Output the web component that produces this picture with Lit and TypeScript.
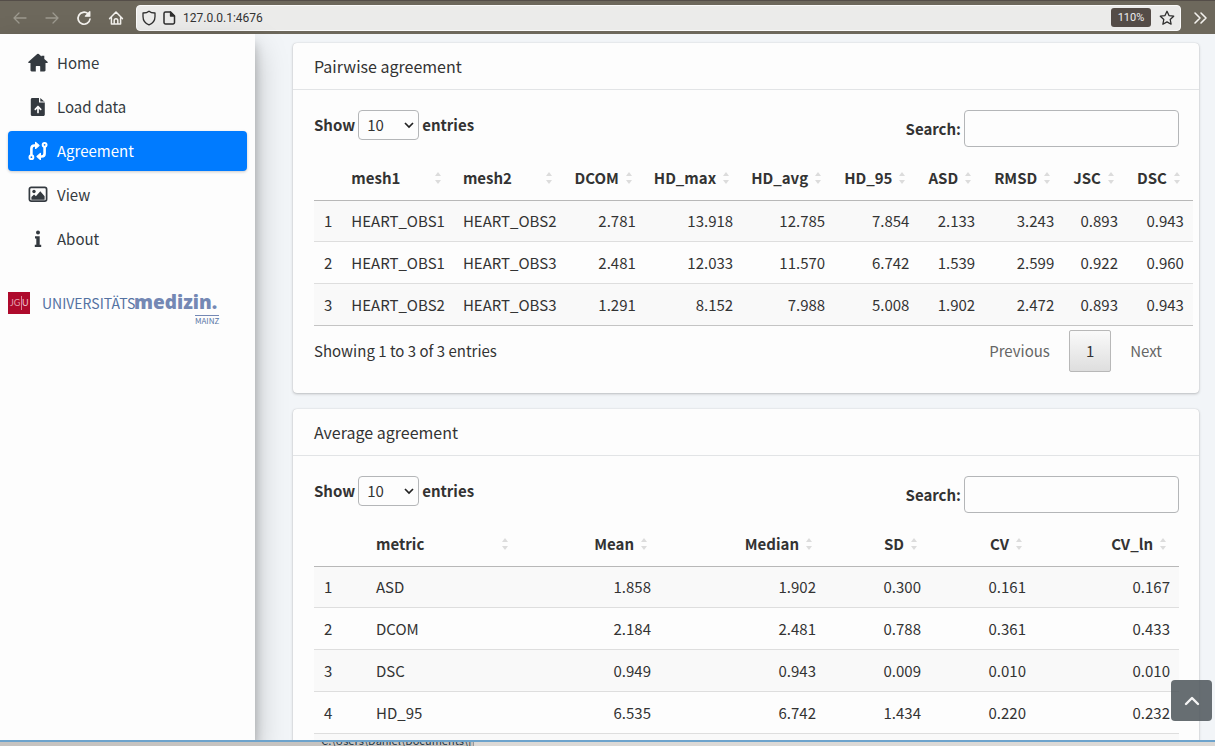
import { LitElement, html, svg, css } from "lit";
import { customElement, property } from "lit/decorators.js";
import { classMap } from "lit/directives/class-map.js";

const stroke = (d: unknown, size = 16, cls = "") =>
  html`<svg class=${cls} width=${size} height=${size} viewBox="0 0 16 16" fill="none" stroke="currentColor" stroke-width="1.3" stroke-linecap="round" stroke-linejoin="round" aria-hidden="true">${d}</svg>`;

const icons = {
  back: svg`<path d="M14 8H2M7 3L2 8l5 5"/>`,
  forward: svg`<path d="M2 8h12M9 3l5 5-5 5"/>`,
  reload: svg`<path stroke-width="1.7" d="M14 9A6 6 0 1 1 12 3.7"/><path fill="currentColor" d="M13.8 1.8v4.4H9.4z"/>`,
  home: svg`<path stroke-width="1.5" d="M1.6 8.6L8 2l6.400 6.600M3.400 7.200V14h9.200V7.200M6.200 14v-3.500a1.800 1.800 0 0 1 3.600 0V14"/>`,
  shield: svg`<path d="M8 1.300C6.500 2.600 4.200 3 2 3v3.500c0 4 2.300 7 6 8.400 3.700-1.400 6-4.400 6-8.400V3c-2.200 0-4.500-.4-6-1.700z"/>`,
  page: svg`<path stroke-width="1.500" d="M4.500 2h5l4 4v6.500a1.500 1.500 0 0 1-1.500 1.500H4.500A1.500 1.500 0 0 1 3 12.500v-9A1.500 1.500 0 0 1 4.500 2z"/><path fill="currentColor" d="M9.500 2v4h4z"/>`,
  star: svg`<path d="M8 1.300l2 4.300 4.700.6-3.500 3.300.9 4.700L8 11.900l-4.100 2.300.9-4.700L1.300 6.200 6 5.600z"/>`,
  more: svg`<path stroke-width="1.600" d="M2 3l5 5-5 5M8 3l5 5-5 5"/>`,
};

const navIcons: Record<string, unknown> = {
  Home: html`<svg width="20" height="20" viewBox="0 0 20 20" fill="currentColor" aria-hidden="true"><path d="M10 .8a1.200 1.200 0 0 1 .8.3l2.700 2.300V2.700h2.800v3.200l3.200 2.900c.5.500.3 1.300-.5 1.300h-1.500v7.100c0 .7-.5 1.200-1.200 1.200h-4.100v-4.900a.6.6 0 0 0-.6-.6H8.400a.6.6 0 0 0-.6.6v4.900H3.700c-.7 0-1.200-.5-1.200-1.200v-7.100H1c-.8 0-1-.8-.5-1.300l8.700-7.700a1.200 1.200 0 0 1 .8-.3z"/></svg>`,
  "Load data": html`<svg width="20" height="20" viewBox="0 0 20 20" aria-hidden="true"><path fill="currentColor" d="M4.300 1h6.700v4.500h5.800V17.500c0 .9-.6 1.500-1.500 1.500H4.300c-.9 0-1.500-.6-1.500-1.500v-15C2.800 1.600 3.400 1 4.300 1zM12.300 1l4.500 3.900v-.4h-4.500z"/><path d="M10 15.500V10M7.300 12.300L10 9.500l2.700 2.800" fill="none" stroke="#fdfdfd" stroke-width="1.700" stroke-linecap="round" stroke-linejoin="round"/></svg>`,
  Agreement: html`<svg width="20" height="20" viewBox="0 0 20 20" fill="none" stroke="currentColor" stroke-width="2.600" stroke-linecap="round" stroke-linejoin="round" aria-hidden="true"><circle cx="3.400" cy="16.200" r="1.900" stroke-width="2"/><circle cx="16.600" cy="3.800" r="1.900" stroke-width="2"/><path d="M3.400 13.500V7.500c0-1.900 1.200-3 3-3h1.800M16.600 6.500v6c0 1.900-1.200 3-3 3h-1.800"/><path fill="currentColor" stroke-width="1.200" d="M7.600 1.500v6l3.400-3zM12.400 12.500v6l-3.400-3z"/></svg>`,
  View: html`<svg width="20" height="20" viewBox="0 0 20 20" aria-hidden="true"><rect x="1.400" y="2.400" width="17.200" height="13.700" rx="1.800" fill="none" stroke="currentColor" stroke-width="1.700"/><circle cx="6" cy="6.500" r="1.700" fill="currentColor"/><path fill="currentColor" d="M3.400 14.800v-2.700l2.700-2.700 1.800 1.800 4.400-5 4.300 5v3.600z"/></svg>`,
  About: html`<svg width="20" height="20" viewBox="0 0 20 20" fill="currentColor" aria-hidden="true"><circle cx="10" cy="3.500" r="2"/><path d="M7 7.300h4.700v8.500h1.500V18H6.800v-2.200h1.500V9.500H7z"/></svg>`,
};

interface Column {
  label: string;
  text?: boolean;
  width?: number;
}

@customElement("data-card")
class DataCard extends LitElement {
  @property() heading = "";
  @property({ attribute: false }) columns: Column[] = [];
  @property({ attribute: false }) rows: string[][] = [];
  @property({ type: Boolean }) footer = false;

  static styles = css`
    :host {
      display: block;
      background: #fdfdfd;
      border-radius: 4px;
      box-shadow: 0 0 1px rgba(0, 0, 0, 0.2), 0 1px 3px rgba(0, 0, 0, 0.22);
    }
    h3 {
      margin: 0;
      padding: 11px 21px;
      font-size: 16px;
      line-height: 24px;
      font-weight: 400;
      border-bottom: 1px solid #e2e4e6;
    }
    .body {
      padding: 20px 20px 21px 21px;
    }
    .controls {
      display: flex;
      justify-content: space-between;
      align-items: flex-start;
      height: 45px;
      font-weight: 700;
    }
    label {
      display: flex;
      align-items: center;
      gap: 3px;
    }
    input,
    select {
      box-sizing: border-box;
      font: inherit;
      font-weight: 400;
      color: #333;
      border: 1px solid #b4b6b8;
      border-radius: 4px;
      background: transparent;
    }
    input {
      width: 215px;
      height: 37px;
      padding: 5px;
    }
    .picker {
      display: grid;
      align-items: center;
      justify-items: end;
    }
    .picker > * {
      grid-area: 1 / 1;
    }
    .picker svg {
      margin-right: 5px;
      pointer-events: none;
    }
    select {
      appearance: none;
      width: 61px;
      height: 30px;
      padding: 0 8px;
    }
    table {
      border-collapse: separate;
      border-spacing: 0;
      min-width: 100%;
      border-bottom: 1px solid #c4c4c4;
      white-space: nowrap;
    }
    th,
    td {
      padding: 8px 9px;
      text-align: right;
      line-height: 25px;
    }
    th {
      padding: 10px 9px;
      border-bottom: 1px solid #b8b8b8;
      font-weight: 700;
    }
    th:nth-child(n + 7) {
      padding-left: 10px;
    }
    td {
      border-top: 1px solid #dedede;
      height: 25px;
    }
    td:first-child {
      padding: 8px 10px;
    }
    tbody tr:first-child td {
      border-top: 0;
      padding-top: 7px;
    }
    tbody tr:nth-child(odd) {
      background: #f9f9f9;
    }
    .text {
      text-align: left;
    }
    .head {
      display: flex;
      align-items: center;
      justify-content: flex-end;
      gap: 7px;
      padding-right: 4px;
    }
    .text .head {
      justify-content: space-between;
    }
    .footer {
      display: flex;
      justify-content: space-between;
      padding-top: 4px;
    }
    .info {
      padding-top: 9px;
      line-height: 24px;
    }
    .pages {
      display: flex;
      gap: 2px;
    }
    .pages button {
      font: inherit;
      color: #666;
      border: 1px solid transparent;
      border-radius: 2px;
      background: none;
      padding: 0 16px;
      height: 42px;
    }
    .pages .current {
      color: #333;
      border-color: #b8b8b8;
      background: linear-gradient(#fafafa, #dedede);
    }
  `;

  render() {
    const sorter = html`<svg width="6" height="14" viewBox="0 0 6 14" fill="#dcdcdc" aria-hidden="true"><path d="M0 5l3-4 3 4zM0 9h6l-3 4z"/></svg>`;
    return html`
      <h3>${this.heading}</h3>
      <div class="body">
        <div class="controls">
          <label>Show
            <span class="picker">
              <select><option>10</option></select>
              <svg width="10" height="8" viewBox="0 0 10 8" fill="none" stroke="#222" stroke-width="1.700" aria-hidden="true"><path d="M1 2l4 4 4-4"/></svg>
            </span>entries</label>
          <label>Search:<input type="search" /></label>
        </div>
        <table>
          <colgroup>
            ${this.columns.map((c) => (c.width ? html`<col style="width:${c.width}px" />` : html`<col />`))}
          </colgroup>
          <thead>
            <tr>
              ${this.columns.map(
                (c) => html`<th class=${classMap({ text: !!c.text })}>${c.label ? html`<div class="head">${c.label}${sorter}</div>` : ""}</th>`
              )}
            </tr>
          </thead>
          <tbody>
            ${this.rows.map(
              (r) => html`<tr>${r.map((v, i) => html`<td class=${classMap({ text: !!this.columns[i].text })}>${v}</td>`)}</tr>`
            )}
          </tbody>
        </table>
        ${this.footer
          ? html`<div class="footer">
              <div class="info">Showing 1 to 3 of 3 entries</div>
              <div class="pages">
                <button>Previous</button><button class="current">1</button><button>Next</button>
              </div>
            </div>`
          : ""}
      </div>
    `;
  }
}

const pairColumns: Column[] = [
  { label: "", text: true },
  { label: "mesh1", text: true },
  { label: "mesh2", text: true },
  ...["DCOM", "HD_max", "HD_avg", "HD_95", "ASD", "RMSD", "JSC", "DSC"].map((label) => ({ label })),
];
const pairRows = [
  ["1", "HEART_OBS1", "HEART_OBS2", "2.781", "13.918", "12.785", "7.854", "2.133", "3.243", "0.893", "0.943"],
  ["2", "HEART_OBS1", "HEART_OBS3", "2.481", "12.033", "11.570", "6.742", "1.539", "2.599", "0.922", "0.960"],
  ["3", "HEART_OBS2", "HEART_OBS3", "1.291", "8.152", "7.988", "5.008", "1.902", "2.472", "0.893", "0.943"],
];
const averageColumns: Column[] = [
  { label: "", text: true, width: 53 },
  { label: "metric", text: true, width: 154 },
  { label: "Mean", width: 139 },
  { label: "Median", width: 165 },
  { label: "SD", width: 105 },
  { label: "CV", width: 105 },
  { label: "CV_ln", width: 144 },
];
const averageRows = [
  ["1", "ASD", "1.858", "1.902", "0.300", "0.161", "0.167"],
  ["2", "DCOM", "2.184", "2.481", "0.788", "0.361", "0.433"],
  ["3", "DSC", "0.949", "0.943", "0.009", "0.010", "0.010"],
  ["4", "HD_95", "6.535", "6.742", "1.434", "0.220", "0.232"],
  ["", "", "", "", "", "", ""],
];

@customElement("app-root")
class AppRoot extends LitElement {
  static styles = css`
    :host {
      display: flex;
      flex-direction: column;
      position: relative;
      height: 100vh;
      overflow: hidden;
      font: 15px/24px "Noto Sans CJK SC", "Open Sans", sans-serif;
      color: #333;
    }
    .toolbar {
      display: flex;
      align-items: center;
      box-sizing: border-box;
      height: 34px;
      flex: none;
      padding: 0 6px 0 12px;
      background: #6d685c;
      border-top: 1px solid #544d48;
      color: #f4f2ee;
    }
    .toolbar button,
    .top {
      display: flex;
      align-items: center;
      justify-content: center;
      border: 0;
      padding: 0;
      background: none;
      color: inherit;
    }
    .nav {
      display: flex;
      gap: 16px;
      padding-right: 12px;
    }
    .toolbar button.off {
      color: #9d998f;
    }
    .address {
      display: flex;
      align-items: center;
      flex: 1;
      box-sizing: border-box;
      height: 26px;
      padding: 0 5px 0 4px;
      gap: 4px;
      margin-right: 12px;
      border-radius: 4px;
      border: 1px solid #fafafa;
      background: #ebebea;
      color: #2e2e2e;
    }
    .address input {
      flex: 1;
      min-width: 0;
      border: 0;
      padding: 0 2px;
      background: none;
      color: #333;
      font: 12px/18px Roboto, sans-serif;
    }
    .toolbar .zoom {
      width: 40px;
      height: 19px;
      margin-right: 4px;
      border-radius: 3px;
      background: #544c47;
      color: #eee;
      font: 11px/19px Roboto, sans-serif;
    }
    .window {
      display: flex;
      flex: 1;
      min-height: 0;
      background: #f2f5f8;
    }
    .sidebar {
      box-sizing: border-box;
      width: 255px;
      flex: none;
      padding: 9px 8px;
      background: #fdfdfd;
      box-shadow: 0 15px 30px rgba(0, 0, 0, 0.25), 0 10px 10px rgba(0, 0, 0, 0.22);
    }
    nav {
      display: flex;
      flex-direction: column;
      gap: 4px;
    }
    nav a {
      display: flex;
      align-items: center;
      gap: 9px;
      height: 40px;
      padding-left: 20px;
      border-radius: 4px;
      color: #343a40;
      text-decoration: none;
    }
    nav a.active {
      background: #007bff;
      color: #fff;
      box-shadow: 0 1px 3px rgba(0, 0, 0, 0.2);
    }
    .logo {
      display: block;
      margin-top: 31px;
    }
    main {
      flex: 1;
      min-width: 0;
      overflow: hidden;
      display: flex;
      flex-direction: column;
      gap: 16px;
      padding: 9px 16px 0 38px;
    }
    data-card {
      flex: none;
    }
    .top {
      position: absolute;
      right: 3px;
      bottom: 25px;
      width: 41px;
      height: 41px;
      border-radius: 4px;
      background: rgba(82, 90, 95, 0.88);
      color: #f5f5f5;
    }
    .desktop {
      box-sizing: border-box;
      flex: none;
      height: 6px;
      border-top: 2px solid #6da3cc;
      background: #dcd9d6;
      display: flex;
    }
    .path {
      box-sizing: border-box;
      width: 39%;
      padding-right: 1px;
      border-right: 1px solid #999;
      overflow: hidden;
      display: flex;
      align-items: flex-end;
      justify-content: flex-end;
      background: #c6c3c0;
      color: #223848;
      font: 11px/12px "Noto Sans CJK SC", sans-serif;
    }
  `;

  render() {
    return html`
      <header class="toolbar">
        <div class="nav">
          <button class="off" aria-label="Back">${stroke(icons.back)}</button>
          <button class="off" aria-label="Forward">${stroke(icons.forward)}</button>
          <button aria-label="Reload">${stroke(icons.reload)}</button>
          <button aria-label="Home">${stroke(icons.home)}</button>
        </div>
        <div class="address">
          ${stroke(icons.shield)} ${stroke(icons.page)}
          <input aria-label="Address" value="127.0.0.1:4676" />
          <button class="zoom">110%</button>
          <button aria-label="Bookmark">${stroke(icons.star)}</button>
        </div>
        <button aria-label="More tools">${stroke(icons.more)}</button>
      </header>
      <div class="window">
        <aside class="sidebar">
          <nav>
            ${Object.keys(navIcons).map(
              (name) => html`<a href="#" class=${classMap({ active: name === "Agreement" })}>${navIcons[name]}${name}</a>`
            )}
          </nav>
          <svg class="logo" width="216" height="38" viewBox="0 0 216 38" role="img" aria-label="Universitätsmedizin Mainz">
            <rect y="2" width="22" height="22" fill="#ae0a2c" />
            <text x="2" y="16" font-family="Lato" font-size="9" fill="#e6a3b0">JG</text>
            <path d="M13.500 6v14" stroke="#dc8797" stroke-width="1" />
            <text x="14" y="16" font-family="Lato" font-size="9" fill="#f0c4cc">U</text>
            <text x="34" y="19" font-family="Noto Sans CJK SC" font-size="14" fill="#5472a2">UNIVERSITÄTS</text>
            <text x="126" y="19" font-family="Open Sans" font-size="19" font-weight="800" fill="#7488b4">medizin.</text>
            <path d="M187 25.500h24" stroke="#7488b4" />
            <text x="187" y="34" font-family="Noto Sans CJK SC" font-size="8" fill="#5a76a6">MAINZ</text>
          </svg>
        </aside>
        <main>
          <data-card heading="Pairwise agreement" .columns=${pairColumns} .rows=${pairRows} footer></data-card>
          <data-card heading="Average agreement" .columns=${averageColumns} .rows=${averageRows}></data-card>
        </main>
      </div>
      <div class="desktop"><div class="path">C:\\Users\\Daniel\\Documents\\[</div></div>
      <button class="top" aria-label="Back to top">
        <svg width="18" height="12" viewBox="0 0 18 12" fill="none" stroke="currentColor" stroke-width="2.400" stroke-linecap="round" stroke-linejoin="round" aria-hidden="true"><path d="M3 9l6-6 6 6"/></svg>
      </button>
    `;
  }
}
